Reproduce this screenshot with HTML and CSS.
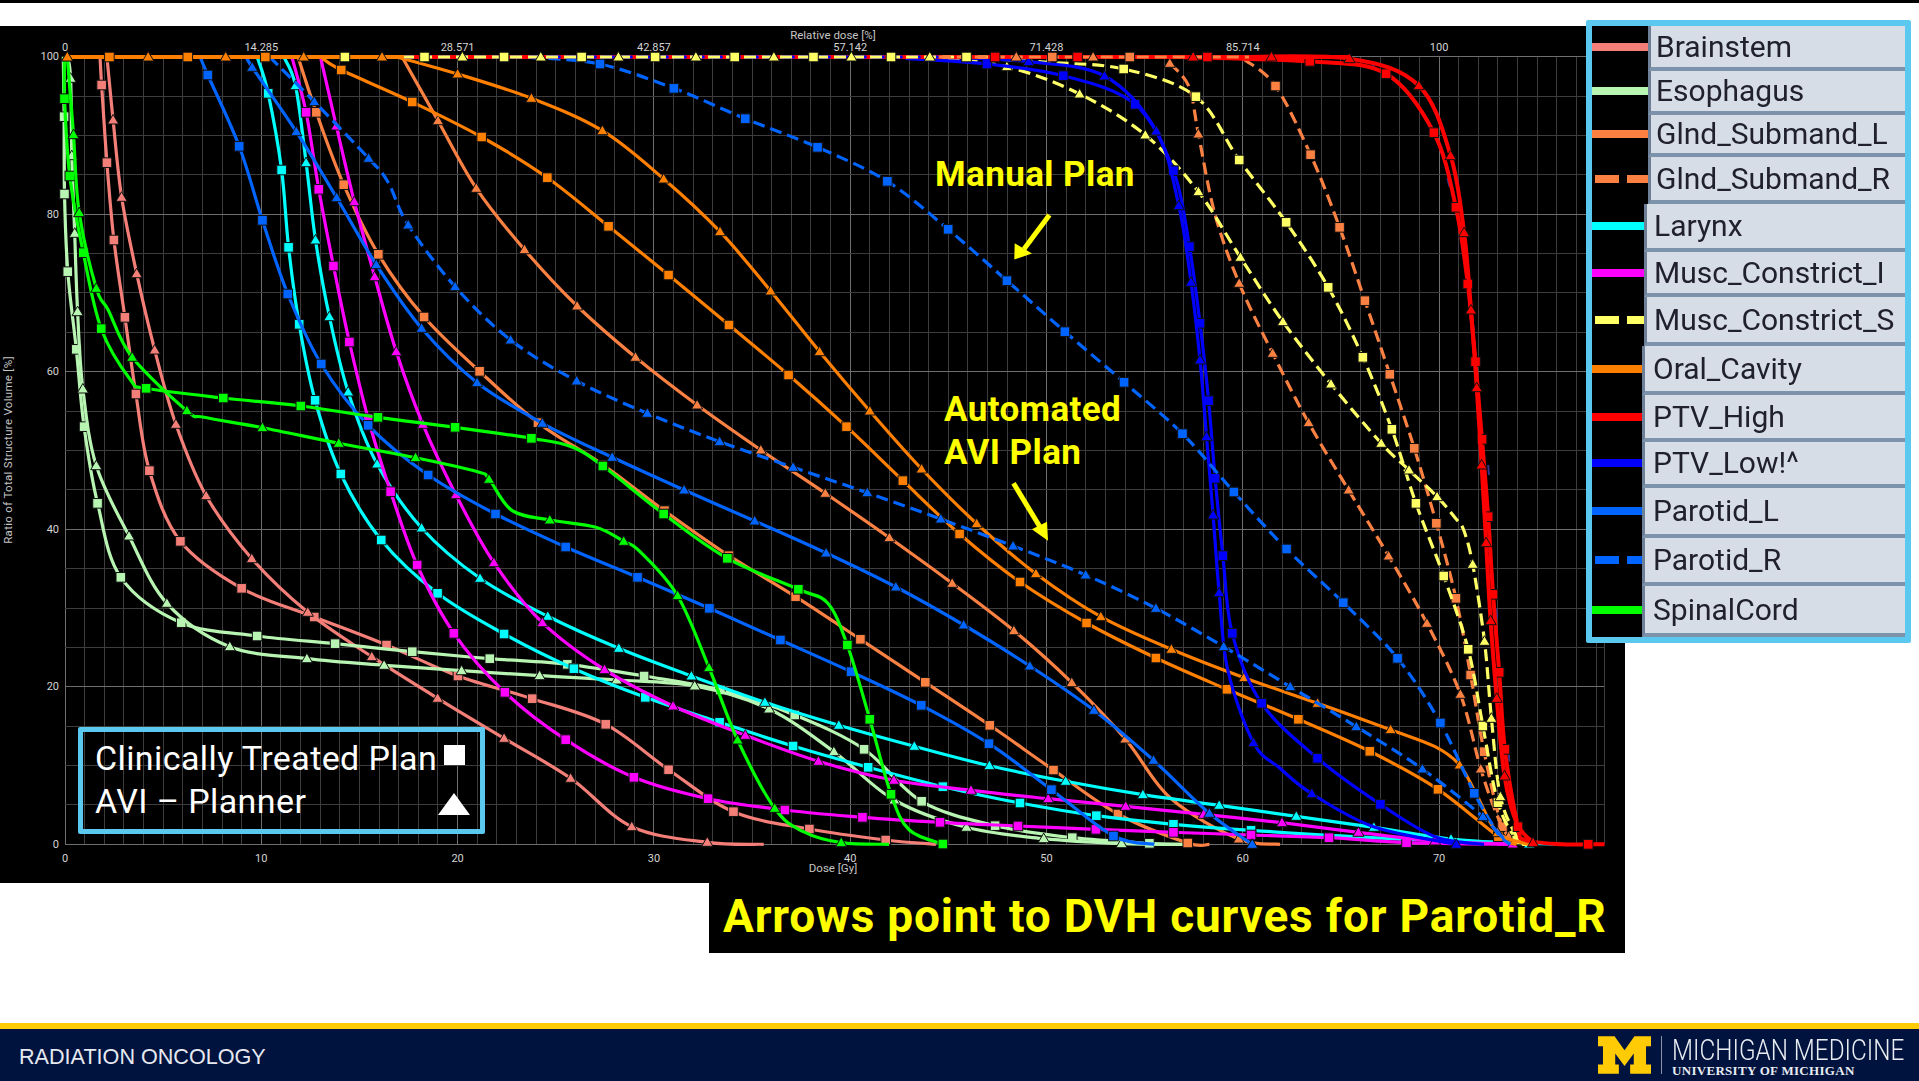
FILE: index.html
```html
<!DOCTYPE HTML>
<html>
<head>
  <title>DVH comparison - Radiation Oncology</title>
  <link rel="stylesheet" href="styles.css">
</head>
<body>
  <div class="top-rule"></div>
  <div class="slide">
    <div class="plot">
      <svg id="dvh" class="dvh" viewBox="0 26 1625 857" width="1625" height="857"></svg>

      <div class="plan-key">
        <div class="plan-key-row">Clinically Treated Plan <span class="key-square"></span></div>
        <div class="plan-key-row">AVI – Planner <span class="key-triangle"></span></div>
      </div>

      <div class="note note-manual">Manual Plan</div>
      <div class="note note-avi">Automated<br>AVI Plan</div>
    </div>

    <div class="caption">Arrows point to DVH curves for Parotid_R</div>

    <div class="legend">
      <div class="legend-row"><span class="swatch c-brainstem"></span><span class="legend-name">Brainstem</span></div>
      <div class="legend-row"><span class="swatch c-esophagus"></span><span class="legend-name">Esophagus</span></div>
      <div class="legend-row"><span class="swatch c-gland"></span><span class="legend-name">Glnd_Submand_L</span></div>
      <div class="legend-row"><span class="swatch swatch-dash c-gland"></span><span class="legend-name">Glnd_Submand_R</span></div>
      <div class="legend-row"><span class="swatch c-larynx"></span><span class="legend-name">Larynx</span></div>
      <div class="legend-row"><span class="swatch c-musc"></span><span class="legend-name">Musc_Constrict_I</span></div>
      <div class="legend-row"><span class="swatch swatch-dash c-muscs"></span><span class="legend-name">Musc_Constrict_S</span></div>
      <div class="legend-row"><span class="swatch c-oral"></span><span class="legend-name">Oral_Cavity</span></div>
      <div class="legend-row"><span class="swatch c-high"></span><span class="legend-name">PTV_High</span></div>
      <div class="legend-row"><span class="swatch c-low"></span><span class="legend-name">PTV_Low!^</span></div>
      <div class="legend-row"><span class="swatch c-parotid"></span><span class="legend-name">Parotid_L</span></div>
      <div class="legend-row"><span class="swatch swatch-dash c-parotid"></span><span class="legend-name">Parotid_R</span></div>
      <div class="legend-row"><span class="swatch c-spinal"></span><span class="legend-name">SpinalCord</span></div>
    </div>
  </div>

  <div class="footer">
    <div class="footer-dept">RADIATION ONCOLOGY</div>
    <div class="footer-brand">
      <svg class="block-m" viewBox="0 0 160 113" width="53" height="38">
        <path d="M0 0H50L80 42L110 0H160V30H145V85H160V113H97V85H108V52L80 90L52 52V85H63V113H0V85H15V30H0Z"/>
      </svg>
      <div class="brand-rule"></div>
      <div class="brand-text">
        <div class="brand-name">MICHIGAN MEDICINE</div>
        <div class="brand-sub">UNIVERSITY OF MICHIGAN</div>
      </div>
    </div>
  </div>

  <script src="chart.js"></script>
</body>
</html>
```

FILE: styles.css
```css
body {
  margin: 0;
  height: 100vh;
  display: flex;
  flex-direction: column;
  background-color: white;
  overflow: hidden;
  font-family: Roboto, sans-serif;
}

.top-rule {
  height: 3px;
  background-color: black;
}

.slide {
  flex: 1;
  position: relative;
  padding-top: 23px;
}

.plot {
  position: relative;
  width: 1625px;
  height: 857px;
  background-color: black;
}

.dvh {
  display: block;
}

.caption {
  width: 916px;
  height: 70px;
  margin-left: 709px;
  padding-left: 14px;
  box-sizing: border-box;
  background-color: black;
  color: #ffff00;
  font-size: 46px;
  font-weight: 700;
  letter-spacing: 0.8px;
  line-height: 66px;
  white-space: nowrap;
}

/* chart lines */
.grid-minor { stroke: #3d3d3d; stroke-width: 1; shape-rendering: crispEdges; }
.grid-major { stroke: #6e6e6e; stroke-width: 1; shape-rendering: crispEdges; }
.tick { font-size: 11px; fill: #d4d4d4; text-anchor: middle; dominant-baseline: central; }
.tick-y { text-anchor: end; }
.axis-title { font-size: 11.5px; fill: #c4c4c4; text-anchor: middle; dominant-baseline: central; }
.axis-side { letter-spacing: 0.3px; }

.curve { fill: none; stroke: currentColor; stroke-width: 3.2; stroke-linejoin: round; }
.curve-dash { stroke-dasharray: 12 6; }
.curve-thick { stroke-width: 4; }
.marker { fill: currentColor; stroke: #111; stroke-width: 1; }
.arrow { fill: #ffff00; }
.arrow-shaft { stroke: #ffff00; stroke-width: 5; }
.stray { stroke: #34348c; stroke-width: 2; }

/* structure colours, shared by legend and curves */
.c-brainstem { color: #f47f78; }
.c-esophagus { color: #b9f5b2; }
.c-gland { color: #fb8142; }
.c-larynx { color: #00ffff; }
.c-musc { color: #ff00ff; }
.c-muscs { color: #ffff66; }
.c-oral { color: #ff8000; }
.c-high { color: #ff0000; }
.c-low { color: #0000ff; }
.c-parotid { color: #0064ff; }
.c-spinal { color: #00ff00; }

.plan-key {
  position: absolute;
  left: 78px;
  top: 701px;
  width: 407px;
  height: 107px;
  box-sizing: border-box;
  padding: 5px 0 0 12px;
  border: 5px solid #5bc8f0;
  border-radius: 2px;
  color: white;
  font-size: 34px;
  letter-spacing: 0.4px;
  line-height: 43px;
}

.plan-key-row {
  position: relative;
  white-space: nowrap;
}

.key-square {
  position: absolute;
  left: 349px;
  top: 8px;
  width: 21px;
  height: 20px;
  background-color: white;
}

.key-triangle {
  position: absolute;
  left: 343px;
  top: 13px;
  width: 0;
  height: 0;
  border-left: 16px solid transparent;
  border-right: 16px solid transparent;
  border-bottom: 22px solid white;
}

.note {
  position: absolute;
  color: #ffff00;
  font-size: 35px;
  font-weight: 700;
  letter-spacing: 0.4px;
  line-height: 42.6px;
  white-space: nowrap;
}

.note-manual {
  left: 935px;
  top: 128px;
}

.note-avi {
  left: 944px;
  top: 363px;
}

.legend {
  position: absolute;
  left: 1586px;
  top: 17px;
  width: 325px;
  height: 623px;
  box-sizing: border-box;
  border: 6px solid #5bc8f0;
  border-radius: 2px;
  background-color: black;
  display: grid;
  grid-template-rows: 44.7px 44.3px 41.7px 47.3px 47.7px 45px 49px 49.3px 46.7px 46.3px 50px 47.7px 1fr;
}

.legend-row {
  display: flex;
  align-items: stretch;
}

.swatch {
  width: 56px;
  height: 8px;
  align-self: center;
  margin-top: -3px;
  background-color: currentColor;
  flex-shrink: 0;
}

.swatch-dash {
  background: repeating-linear-gradient(90deg, currentColor 0 24px, transparent 24px 32px);
  background-position: 3px 0;
  background-repeat: no-repeat;
}

.legend-name {
  flex: 1;
  display: flex;
  align-items: center;
  padding-left: 5px;
  background-color: #d6dde6;
  border-left: 3px solid #6d8097;
  border-bottom: 4px solid #7d93ab;
  color: #20202e;
  font-size: 30px;
  filter: blur(0.4px);
}

.legend-row:nth-child(n+5) .swatch { width: 52px; }
.legend-row:nth-child(n+5) .legend-name { padding-left: 7px; }
.legend-row:nth-child(n+8) .swatch { width: 50px; }
.legend-row:nth-child(n+8) .legend-name { padding-left: 8px; }

.footer {
  height: 52px;
  flex-shrink: 0;
  display: flex;
  align-items: center;
  justify-content: space-between;
  border-top: 6px solid #ffcb05;
  background-color: #00133f;
}

.footer-dept {
  margin: 4px 0 0 19px;
  color: #e6e9ef;
  font-family: "Liberation Sans", sans-serif;
  font-size: 21.6px;
}

.footer-brand {
  display: flex;
  align-items: center;
  margin-right: 16px;
}

.block-m { fill: #ffcb05; }

.brand-rule {
  width: 1px;
  height: 38px;
  margin: 0 10px;
  background-color: #8a93a6;
}

.brand-text {
  width: 231px;
  padding-top: 4px;
  color: #e9ecf1;
}

.brand-name {
  font-weight: 300;
  font-size: 29px;
  line-height: 27px;
  white-space: nowrap;
  transform: scaleX(0.837);
  transform-origin: left center;
}

.brand-sub {
  font-family: "Liberation Serif", serif;
  font-weight: 700;
  font-size: 13px;
  line-height: 13px;
  letter-spacing: 0.3px;
  white-space: nowrap;
}
```

FILE: chart.js
```js
// DVH plot. Points were traced from the printout, so they are kept in trace units
// (2.45 per pixel across, 3 per pixel down). A * means a bend with no marker on it.
var TX = 2.45, TY = 3;

var curves = [
  ["c-brainstem", "square", "245,170* 249,255 262,488 279,720 306,952 333,1182 366,1412 442,1624 592,1765 770,1851 947,1935 1122,2028 1304,2096 1484,2173 1638,2309 1797,2435 1983,2487 2170,2520 2293,2533*"],
  ["c-brainstem", "tri", "262,170* 277,360 298,592 335,821 379,1050 431,1273 505,1487 617,1676 754,1837 911,1970 1072,2095 1235,2215 1398,2335 1548,2480 1733,2527 1871,2533*"],
  ["c-esophagus", "square", "155,170* 157,350 158,582 166,815 187,1048 206,1280 239,1510 296,1732 444,1868 630,1908 821,1931 1010,1955 1200,1976 1390,1993 1578,2028 1765,2070 1947,2145 2117,2248 2258,2404 2438,2477 2627,2513 2816,2530 2898,2533*"],
  ["c-esophagus", "tri", "165,170* 173,235 176,467 183,700 190,935 203,1167 236,1397 316,1608 409,1810 563,1940 752,1976 941,1996 1131,2012 1322,2027 1511,2040 1702,2058 1884,2127 2043,2255 2191,2400 2368,2482 2557,2516 2748,2531 2900,2533*"],
  ["c-gland", "square", "730,170* 775,337 842,554 927,763 1039,951 1175,1114 1318,1268 1478,1395 1628,1532 1786,1667 1949,1790 2108,1918 2267,2047 2425,2176 2581,2310 2739,2442 2910,2529 2963,2533*"],
  ["c-gland", "tri", "985,170* 1073,362 1167,565 1285,749 1414,918 1557,1072 1708,1215 1864,1350 2022,1480 2179,1613 2333,1750 2484,1892 2626,2048 2757,2217 2868,2395* 3035,2517 3136,2533*"],
  ["c-gland", "square", "3048,178* 3125,258 3211,464 3282,682 3344,902 3405,1123 3465,1345 3519,1570 3567,1795 3603,2025 3636,2255 3681,2480 3726,2530*", "dash"],
  ["c-gland", "tri", "2866,190 2913,260* 2936,402 2976,640* 3036,850 3118,1060 3206,1268 3304,1470 3402,1668 3496,1870 3578,2083 3628,2307 3666,2440* 3696,2510 3736,2533*", "dash"],
  ["c-larynx", "square", "630,170* 657,280 690,510 707,742 733,973 772,1201 835,1422 934,1620 1072,1780 1235,1902 1406,2006 1581,2092 1763,2167 1943,2238 2127,2302 2310,2360 2499,2409 2686,2447 2875,2473 3065,2491 3400,2515* 3826,2533*"],
  ["c-larynx", "tri", "695,170* 724,257 750,488 773,720 807,950 853,1176 924,1392 1033,1584 1176,1735 1342,1849 1516,1945 1694,2028 1874,2107 2055,2176 2240,2239 2424,2297 2611,2344 2800,2384 2987,2416 3176,2449 3366,2482 3555,2517 3746,2532"],
  ["c-musc", "square", "715,170* 750,337 781,568 817,798 856,1026 902,1256 957,1475 1022,1695 1112,1900 1237,2077 1386,2219 1553,2332 1735,2396 1923,2430 2113,2452 2303,2467 2494,2478 2685,2488 2875,2497 3065,2505 3256,2513 3446,2528 3700,2533*"],
  ["c-musc", "tri", "785,170* 824,378 868,605 918,830 971,1055 1036,1273 1117,1484 1210,1688 1329,1868 1481,2009 1649,2118 1826,2206 2005,2284 2190,2341 2379,2371 2568,2396 2758,2419 2949,2443 3141,2468 3328,2497 3516,2523 3706,2532"],
  ["c-muscs", "square", "2368,172* 2568,187* 2753,207 2930,290 3036,480 3151,667 3254,862 3339,1072 3410,1288 3469,1510 3537,1728 3597,1948 3633,2178 3670,2408 3716,2520 3746,2533*", "dash"],
  ["c-muscs", "tri", "2278,172* 2467,200 2645,282 2806,405 2936,575 3039,772 3143,965 3261,1152 3384,1330 3452,1410 3521,1490 3566,1555* 3586,1590* 3608,1693 3637,1924 3654,2155 3676,2390 3716,2510* 3736,2533*", "dash"],
  ["c-oral", "square", "790,175* 836,210 1010,306 1180,411 1341,533 1491,679 1638,825 1786,975 1932,1125 2074,1280 2212,1442 2351,1602 2499,1746 2662,1869 2832,1974 3006,2068 3181,2158 3356,2254 3523,2368 3671,2510 3716,2533*"],
  ["c-oral", "tri", "970,170* 1121,222 1302,295 1476,392 1626,537 1764,695 1888,873 2008,1055 2131,1233 2258,1407 2393,1571 2538,1721 2697,1850 2870,1948 3048,2033 3228,2110 3407,2189 3516,2240* 3576,2295 3616,2380* 3669,2498 3746,2533*"],
  ["c-high", "square", "2900,172* 3209,184 3396,221 3513,398 3567,622 3596,852 3615,1085 3631,1318 3646,1550 3658,1783 3673,2017 3687,2248 3719,2480 3736,2520* 3826,2533* 3891,2533 3931,2533*", "thick"],
  ["c-high", "tri", "3000,172* 3306,176 3476,257 3554,467 3587,698 3604,930 3618,1163 3630,1395 3641,1628 3652,1862 3667,2095 3686,2328 3716,2470* 3756,2528", "thick"],
  ["c-low", "square", "2218,175* 2418,192 2605,227 2781,313 2875,512 2914,740 2940,970 2961,1202 2977,1435 2996,1667 3019,1900 3091,2110 3228,2275 3382,2413 3516,2510* 3636,2533*"],
  ["c-low", "tri", "2328,172* 2520,185 2706,228 2833,393 2888,617 2918,847 2940,1080 2956,1310 2972,1545 2987,1778 3008,2010* 3071,2228 3136,2305* 3214,2381 3365,2480* 3568,2533"],
  ["c-parotid", "square", "490,170* 509,225 586,439 643,661 705,882 787,1092 902,1276 1049,1425 1214,1542 1386,1641 1562,1732 1738,1825 1912,1920 2085,2015 2257,2116 2423,2231 2576,2369 2728,2508 2828,2533*"],
  ["c-parotid", "tri", "605,170* 618,202 726,395 825,593 922,794 1033,985 1169,1148 1329,1270 1500,1372 1676,1470 1849,1563 2024,1659 2195,1761 2361,1875 2523,1998 2680,2131 2826,2281 2963,2440 3068,2533"],
  ["c-parotid", "square", "1300,172* 1470,192 1651,265 1826,356 2003,442 2174,544 2323,688 2467,842 2609,995 2754,1147 2897,1301 3023,1476 3152,1647 3291,1808 3424,1975 3529,2169 3612,2380 3666,2490* 3700,2533*", "dash"],
  ["c-parotid", "tri", "660,170* 770,305 903,475 950,545* 1000,675 1115,860 1251,1020 1413,1143 1586,1240 1763,1325 1943,1402 2125,1478 2305,1557 2482,1638 2660,1725 2832,1825 2998,1940 3161,2060 3323,2180 3485,2307 3633,2450 3676,2510* 3700,2533*", "dash"],
  ["c-spinal", "square", "158,170* 158,296 171,528 204,758 248,986 320,1140* 358,1165 547,1194 737,1218 926,1252 1115,1282 1302,1315 1400,1340* 1477,1398 1626,1542 1782,1675 1956,1768 2028,1810* 2076,1935 2131,2158 2183,2383 2228,2490* 2310,2532"],
  ["c-spinal", "tri", "165,170 180,404 194,638 236,865 265,930* 324,1072 458,1232 500,1252* 643,1283 830,1330 1018,1373 1170,1415* 1198,1438 1255,1532* 1347,1560 1460,1582* 1528,1624 1568,1655* 1660,1787 1737,2003 1807,2220 1898,2425 1968,2495* 2061,2528 2178,2533*"]
];

// the crowded run along 100 %, drawn over the curves
var topRun = [
  ["c-high", "160", "3306", "thick"],
  ["c-parotid", "985", "2200", "dash"],
  ["c-low", "1300", "2300", "dash"],
  ["c-muscs", "985", "2420", "dash"],
  ["c-gland", "2300", "3060", "dash"],
  ["c-oral", "160", "990", "thick"]
];
var topMarks = [
  ["c-oral", "tri", "165 363 553 744 936"],
  ["c-oral", "square", "268 460 650"],
  ["c-muscs", "square", "845 1040 1235 1425 1605 1800 1993 2183 2368"],
  ["c-muscs", "tri", "1133 1325 1515 1705 1896 2086 2278"],
  ["c-high", "tri", "2923 3115"],
  ["c-high", "square", "2438 2640 2958"],
  ["c-gland", "tri", "2490 2678"],
  ["c-gland", "square", "2578 2768"]
];
// faint dark-blue ticks that show beside the PTV_High curve
var stray = [[3361,190,3372,212], [3546,535,3552,562], [3606,960,3612,990], [3646,1395,3648,1425], [3666,1825,3668,1855], [3696,2255,3698,2285]];

var svg = document.getElementById("dvh");

function el(name, attrs, parent) {
  var node = document.createElementNS("http://www.w3.org/2000/svg", name);
  for (var key in attrs) node.setAttribute(key, attrs[key]);
  (parent || svg).appendChild(node);
  return node;
}

function doseX(gy) { return 65 + 19.63 * gy; }
function volY(pct) { return 844.3 - 7.876 * pct; }
var RIGHT = 1604;

function label(x, y, text, cls) {
  el("text", { x: x, y: y, "class": cls }).textContent = text;
}

function drawGrid() {
  for (var gy = 0; gy <= 78; gy++) {
    el("line", { x1: doseX(gy), x2: doseX(gy), y1: volY(100), y2: volY(0), "class": gy % 10 == 0 ? "grid-major" : "grid-minor" });
  }
  el("line", { x1: RIGHT, x2: RIGHT, y1: volY(100), y2: volY(0), "class": "grid-minor" });
  for (var pct = 0; pct <= 100; pct += 5) {
    el("line", { x1: doseX(0), x2: RIGHT, y1: volY(pct), y2: volY(pct), "class": pct % 20 == 0 ? "grid-major" : "grid-minor" });
  }
}

function drawAxes() {
  var relative = ["0", "14.285", "28.571", "42.857", "57.142", "71.428", "85.714", "100"];
  for (var i = 0; i < relative.length; i++) {
    label(doseX(i * 10), 47, relative[i], "tick");
    label(doseX(i * 10), 858, String(i * 10), "tick");
  }
  for (var pct = 0; pct <= 100; pct += 20) {
    label(59, volY(pct), String(pct), "tick tick-y");
  }
  label(833, 35, "Relative dose [%]", "axis-title");
  label(833, 868, "Dose [Gy]", "axis-title");
  var side = el("text", { x: 8, y: 450, "class": "axis-title axis-side", transform: "rotate(-90 8 450)" });
  side.textContent = "Ratio of Total Structure Volume [%]";
}

function parsePoints(str) {
  return str.split(" ").map(function (p) {
    var parts = p.replace("*", "").split(",");
    return { x: parts[0] / TX, y: parts[1] / TY, bend: p.indexOf("*") >= 0 };
  });
}

// Catmull-Rom through the traced points
function smoothPath(pts) {
  var d = "M" + pts[0].x.toFixed(1) + " " + pts[0].y.toFixed(1);
  for (var i = 0; i < pts.length - 1; i++) {
    var p0 = pts[Math.max(i - 1, 0)], p1 = pts[i], p2 = pts[i + 1], p3 = pts[Math.min(i + 2, pts.length - 1)];
    var c1x = p1.x + (p2.x - p0.x) / 6, c1y = p1.y + (p2.y - p0.y) / 6;
    var c2x = p2.x - (p3.x - p1.x) / 6, c2y = p2.y - (p3.y - p1.y) / 6;
    d += "C" + [c1x, c1y, c2x, c2y, p2.x, p2.y].map(function (v) { return v.toFixed(1); }).join(" ");
  }
  return d;
}

function drawMarker(g, shape, x, y) {
  if (shape == "square") {
    el("rect", { x: x - 4.8, y: y - 4.8, width: 9.6, height: 9.6, "class": "marker" }, g);
  } else {
    var pts = [x, y - 5.6, x + 5.6, y + 4, x - 5.6, y + 4].map(function (v) { return v.toFixed(1); }).join(" ");
    el("polygon", { points: pts, "class": "marker" }, g);
  }
}

function drawCurve(c) {
  var g = el("g", { "class": c[0] });
  var pts = parsePoints(c[2]);
  var cls = "curve";
  if (c[3] == "dash") cls += " curve-dash";
  if (c[3] == "thick") cls += " curve-thick";
  el("path", { d: smoothPath(pts), "class": cls }, g);
  pts.forEach(function (p) {
    if (!p.bend) drawMarker(g, c[1], p.x, p.y);
  });
}

function drawTopRun() {
  var y = volY(100) + 0.3;
  topRun.forEach(function (r) {
    var g = el("g", { "class": r[0] });
    var cls = "curve";
    if (r[3] == "dash") cls += " curve-dash";
    if (r[3] == "thick") cls += " curve-thick";
    el("line", { x1: r[1] / TX, x2: r[2] / TX, y1: y, y2: y, "class": cls }, g);
  });
  topMarks.forEach(function (m) {
    var g = el("g", { "class": m[0] });
    m[2].split(" ").forEach(function (x) { drawMarker(g, m[1], x / TX, y); });
  });
}

function drawArrows() {
  el("line", { x1: 1049.4, y1: 215, x2: 1024, y2: 249, "class": "arrow-shaft" });
  el("polygon", { points: "1014.3,259.5 1014.7,243.3 1032,253.5", "class": "arrow" });
  el("line", { x1: 1013.5, y1: 483.3, x2: 1040, y2: 527, "class": "arrow-shaft" });
  el("polygon", { points: "1048,540.7 1031.8,529.3 1047,521.7", "class": "arrow" });
}

drawGrid();
drawAxes();
stray.forEach(function (s) {
  el("line", { x1: s[0] / TX, y1: s[1] / TY, x2: s[2] / TX, y2: s[3] / TY, "class": "stray" });
});
curves.forEach(drawCurve);
drawTopRun();
drawArrows();
```
